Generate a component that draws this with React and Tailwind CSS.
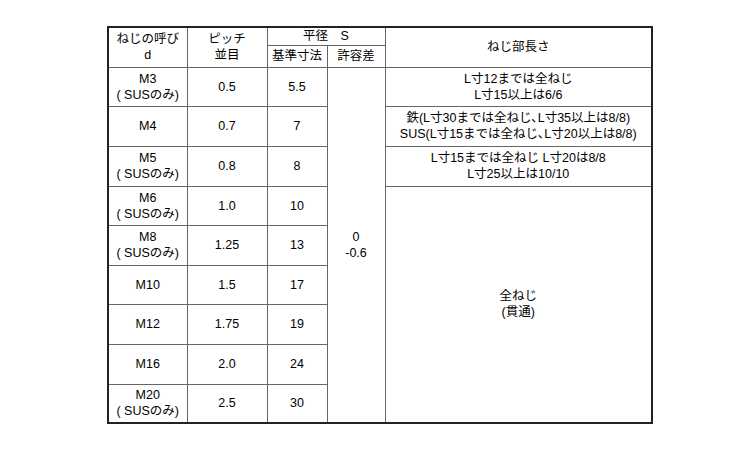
const rows = [
  { d: 'M3', sus: true, p: '0.5', s: '5.5', h: 'h-[39px]' },
  { d: 'M4', sus: false, p: '0.7', s: '7', h: 'h-[40px]' },
  { d: 'M5', sus: true, p: '0.8', s: '8', h: 'h-[40px]' },
  { d: 'M6', sus: true, p: '1.0', s: '10', h: 'h-[39px]' },
  { d: 'M8', sus: true, p: '1.25', s: '13', h: 'h-[40px]' },
  { d: 'M10', sus: false, p: '1.5', s: '17', h: 'h-[39px]' },
  { d: 'M12', sus: false, p: '1.75', s: '19', h: 'h-[40px]' },
  { d: 'M16', sus: false, p: '2.0', s: '24', h: 'h-[40px]' },
  { d: 'M20', sus: true, p: '2.5', s: '30', h: 'h-[39px]' },
];

const cell = 'border border-[#666] text-center align-middle p-0';

export default function App() {
  return (
    <div
      className="w-[750px] h-[450px] bg-white text-black pt-[26px] pl-[107px]"
      style={{ fontFamily: '"Liberation Sans", "Noto Sans CJK JP", sans-serif' }}
    >
      <table className="border-collapse border-2 border-[#222] table-fixed w-[546px] text-[12.5px] leading-[16px]">
        <colgroup>
          <col className="w-[79px]" />
          <col className="w-[80px]" />
          <col className="w-[60px]" />
          <col className="w-[58px]" />
          <col />
        </colgroup>
        <thead>
          <tr className="h-[18px]">
            <td rowSpan={2} className={cell}>
              <div>ねじの呼び</div>
              <div>d</div>
            </td>
            <td rowSpan={2} className={cell}>
              <div>ピッチ</div>
              <div>並目</div>
            </td>
            <td colSpan={2} className={cell}>平径　S</td>
            <td rowSpan={2} className={cell}>ねじ部長さ</td>
          </tr>
          <tr className="h-[22px]">
            <td className={cell}>基準寸法</td>
            <td className={cell}>許容差</td>
          </tr>
        </thead>
        <tbody>
          {rows.map((r, i) => (
            <tr key={r.d} className={r.h}>
              <td className={cell}>
                <div>{r.d}</div>
                {r.sus && <div>( SUSのみ)</div>}
              </td>
              <td className={cell}>{r.p}</td>
              <td className={cell}>{r.s}</td>
              {i === 0 && (
                <td rowSpan={9} className={cell}>
                  <div>0</div>
                  <div>-0.6</div>
                </td>
              )}
              {i === 0 && (
                <td className={cell}>
                  <div>L寸12までは全ねじ</div>
                  <div>L寸15以上は6/6</div>
                </td>
              )}
              {i === 1 && (
                <td className={cell}>
                  <div>鉄(L寸30までは全ねじ､L寸35以上は8/8)</div>
                  <div>SUS(L寸15までは全ねじ､L寸20以上は8/8)</div>
                </td>
              )}
              {i === 2 && (
                <td className={cell}>
                  <div>L寸15までは全ねじ L寸20は8/8</div>
                  <div>L寸25以上は10/10</div>
                </td>
              )}
              {i === 3 && (
                <td rowSpan={6} className={cell}>
                  <div>全ねじ</div>
                  <div>(貫通)</div>
                </td>
              )}
            </tr>
          ))}
        </tbody>
      </table>
    </div>
  );
}
